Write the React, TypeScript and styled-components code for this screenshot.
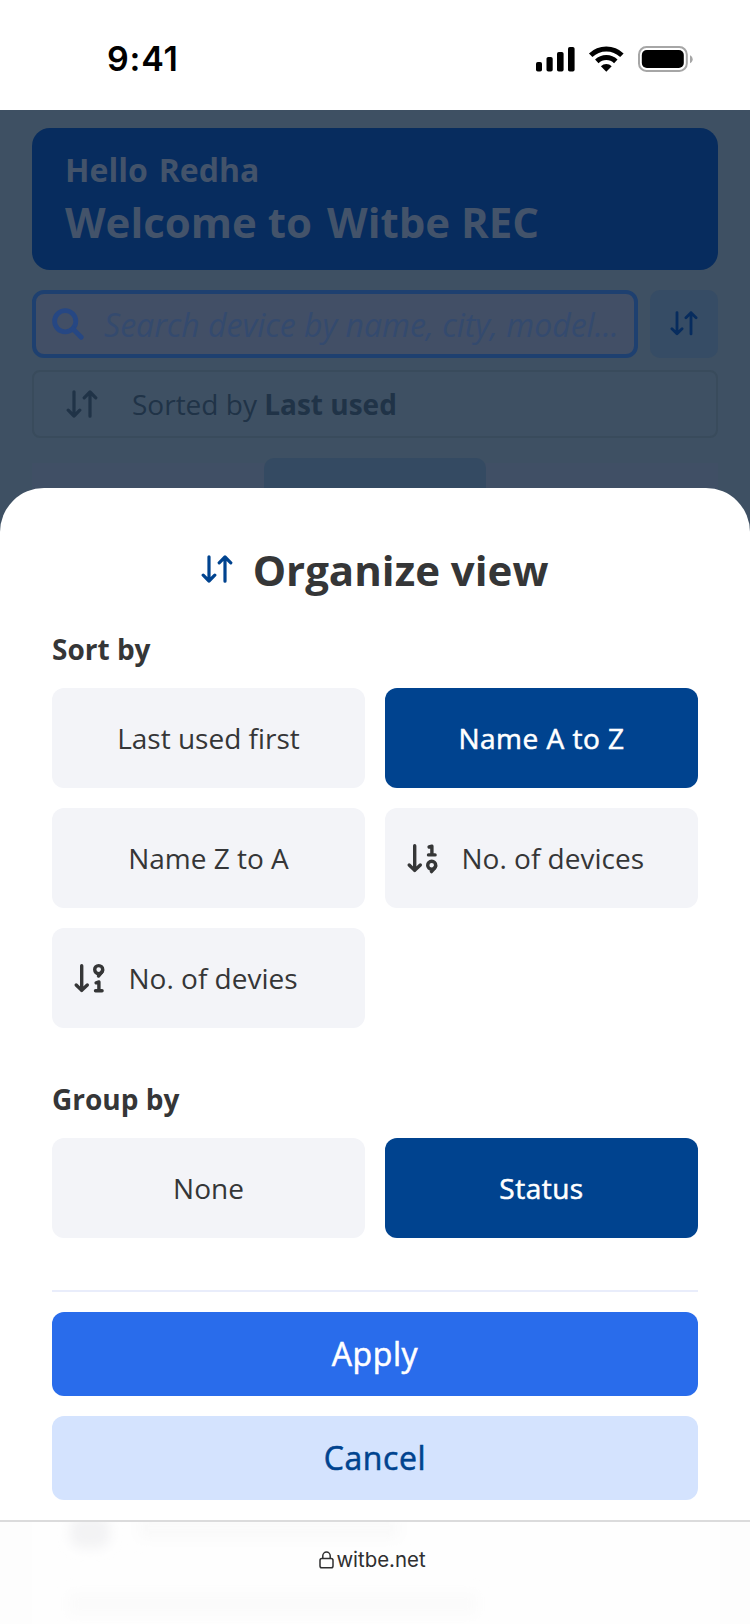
import React from "react";
import styled, { createGlobalStyle, css } from "styled-components";

const GlobalStyle = createGlobalStyle`
  *, *::before, *::after { box-sizing: border-box; }
  html, body { margin: 0; padding: 0; }
  body { background: #fff; font-family: "Open Sans", "Noto Sans", sans-serif; color: #353637; }
  button { font: inherit; border: 0; margin: 0; }
`;

const Screen = styled.div`
  width: 750px;
  height: 1624px;
  display: flex;
  flex-direction: column;
  background: #fff;
  overflow: hidden;
`;

const StatusBar = styled.header`
  height: 110px;
  flex: none;
  display: flex;
  align-items: center;
  justify-content: space-between;
  padding: 8px 57px 0 107px;
`;

const Clock = styled.span`
  font: 600 34px/40px Inter, sans-serif;
  letter-spacing: 0.8px;
  color: #000;
`;

const StatusIcons = styled.svg`
  display: block;
  width: 158px;
  height: 28px;
`;

const Dimmed = styled.div`
  flex: none;
  height: 424px;
  display: flex;
  flex-direction: column;
  padding: 18px 32px 0;
  background: #3e5063;
`;

const Welcome = styled.section`
  height: 142px;
  flex: none;
  border-radius: 18px;
  background: #072c5e;
  color: #43536a;
  padding: 20px 33px;
  font-weight: 700;
`;

const Greeting = styled.div`
  display: flex;
  gap: 11px;
  font-size: 32px;
  line-height: 44px;
`;

const WelcomeTitle = styled.div`
  display: flex;
  gap: 15px;
  margin-top: 1px;
  font-size: 42px;
  line-height: 58px;
`;

const SearchRow = styled.div`
  display: flex;
  gap: 12px;
  margin-top: 20px;
`;

const SearchField = styled.div`
  width: 606px;
  height: 68px;
  display: flex;
  align-items: center;
  gap: 20px;
  padding: 0 16px;
  border: 4px solid #1e4070;
  border-radius: 12px;
  background: #424f66;
  color: #344a6e;
  font-size: 32px;
  font-style: italic;
  white-space: nowrap;
`;

const SearchGlyph = styled.svg`
  display: block;
  flex: none;
  width: 32px;
  height: 32px;
`;

const SortButton = styled.button`
  width: 68px;
  height: 68px;
  display: flex;
  align-items: center;
  justify-content: center;
  padding: 0 0 1px;
  border-radius: 10px;
  background: #364c65;
  color: #072c5e;
`;

const SortedRow = styled.div`
  height: 68px;
  flex: none;
  display: flex;
  align-items: center;
  gap: 34px;
  margin-top: 12px;
  padding: 0 32px;
  border: 2px solid #394b5c;
  border-radius: 8px;
  color: #203347;
  font-size: 28px;
`;

const DevicesCard = styled.div`
  flex: 1;
  display: flex;
  justify-content: center;
  margin-top: 20px;
  background: linear-gradient(#3e5063 5px, #404f65 5px);
`;

const CardTab = styled.div`
  width: 222px;
  border-radius: 10px 10px 0 0;
  background: #344a62;
`;

const Sheet = styled.main`
  position: relative;
  flex: none;
  height: 1032px;
  margin-top: -46px;
  padding: 51px 52px 0;
  border-radius: 44px 44px 0 0;
  background: #fff;
`;

const SheetTitle = styled.h1`
  display: flex;
  align-items: center;
  justify-content: center;
  gap: 20px;
  height: 60px;
  margin: 0;
  padding-right: 1px;
  font-size: 42px;
  font-weight: 700;
`;

const TitleIcon = styled.span`
  display: flex;
  color: #00438f;
`;

const GroupLabel = styled.h2<{ $top: number }>`
  margin: ${(p) => p.$top}px 0 19px;
  font-size: 28px;
  line-height: 40px;
  font-weight: 700;
`;

const OptionGrid = styled.div`
  display: grid;
  grid-template-columns: 1fr 1fr;
  grid-auto-rows: 100px;
  gap: 20px;
`;

const mediumWeight = css`
  -webkit-text-stroke: 0.55px currentColor;
`;

const Option = styled.button<{ $active?: boolean; $withIcon?: boolean }>`
  display: flex;
  align-items: center;
  justify-content: ${(p) => (p.$withIcon ? "flex-start" : "center")};
  gap: 20.5px;
  padding: 0 20px;
  border-radius: 12px;
  background: #f3f4f8;
  color: #353637;
  font-size: 28px;
  ${(p) =>
    p.$active &&
    css`
      background: #00438f;
      color: #fff;
      letter-spacing: 0.5px;
      ${mediumWeight}
    `}
`;

const Divider = styled.hr`
  height: 2px;
  margin: 52px 0 20px;
  border: 0;
  background: #e9edfb;
`;

const Action = styled.button<{ $primary?: boolean }>`
  display: block;
  width: 100%;
  height: 84px;
  padding: 0 0 1px;
  border-radius: 12px;
  background: ${(p) => (p.$primary ? "#296ceb" : "#d4e3fe")};
  color: ${(p) => (p.$primary ? "#fff" : "#00438f")};
  font-size: 32px;
  letter-spacing: 0.6px;
  ${mediumWeight}

  & + & {
    margin-top: 20px;
  }
`;

const BrowserBar = styled.footer`
  position: relative;
  flex: 1;
  display: flex;
  justify-content: center;
  padding: 25px 5px 0 0;
  border-top: 2px solid #dbdbdc;
  background: #fdfdfd;
  overflow: hidden;
`;

const Address = styled.div`
  position: relative;
  display: flex;
  align-items: center;
  gap: 2px;
  height: 26px;
  font: 400 20.4px/26px Inter, sans-serif;
  color: #2f2f30;
`;

const Haze = styled.svg`
  position: absolute;
  inset: 0;
  width: 750px;
  height: 104px;
`;

function SortArrows({ size }: { size: number }) {
  return (
    <svg width={size} height={(size * 28) / 32} viewBox="0 0 32 28" fill="none" stroke="currentColor" strokeWidth="3.2" strokeLinecap="round" strokeLinejoin="round">
      <path d="M8 1.8V26M2.2 20.2L8 26L13.8 20.2M24 26.2V2M18.2 7.8L24 2L29.8 7.8" />
    </svg>
  );
}

function NumericSort({ descending }: { descending?: boolean }) {
  return (
    <svg width="36" height="32" viewBox="0 0 36 32" fill="none" stroke="currentColor" strokeWidth="3.4" strokeLinecap="round" strokeLinejoin="round">
      <path d="M9.7 3.7V28.4M4.2 23L9.7 28.4L15.3 23" />
      <path
        transform={descending ? "translate(19.5 18)" : "translate(19.5 2.2)"}
        d="M4.6 2.8L7.4 2V10.5M4 10.7H10.6"
      />
      <g transform={descending ? "translate(19.5 2.2)" : "translate(19.5 17.8)"}>
        <circle cx="7.2" cy="5.4" r="4" />
        <path d="M11.1 6.4C10.5 8.5 8.7 10 7 11.8" />
      </g>
    </svg>
  );
}

export default function App() {
  return (
    <>
      <GlobalStyle />
      <Screen>
        <StatusBar>
          <Clock>9:41</Clock>
          <StatusIcons viewBox="0 0 158 28">
            <rect x="1" y="17" width="6" height="9.5" rx="1.8" />
            <rect x="11.5" y="12" width="6.2" height="14.5" rx="1.8" />
            <rect x="22" y="7" width="6.6" height="19.5" rx="1.8" />
            <rect x="33" y="2" width="6.6" height="24.5" rx="1.8" />
            <g fill="none" stroke="#000" strokeWidth="5">
              <path d="M55.7 10.2A22.6 22.6 0 0 1 86.9 10.2" />
              <path d="M61.8 16.4A13.7 13.7 0 0 1 80.8 16.4" />
            </g>
            <path d="M71.3 26.8L65.9 21.2A7.8 7.8 0 0 1 76.7 21.2Z" />
            <rect x="104" y="2" width="47.8" height="24" rx="7.5" fill="none" stroke="#a6a6a6" strokeWidth="2" />
            <rect x="106.8" y="5" width="42" height="18" rx="5" />
            <path d="M155 10.2C158.6 12 158.6 16.6 155 18.2Z" fill="#a6a6a6" />
          </StatusIcons>
        </StatusBar>

        <Dimmed>
          <Welcome>
            <Greeting>
              <span>Hello</span>
              <span>Redha</span>
            </Greeting>
            <WelcomeTitle>
              <span>Welcome to</span>
              <span>Witbe REC</span>
            </WelcomeTitle>
          </Welcome>
          <SearchRow>
            <SearchField>
              <SearchGlyph viewBox="0 0 32 32" fill="none" stroke="#264783" strokeWidth="4.8" strokeLinecap="round">
                <circle cx="13.2" cy="13.2" r="10.6" />
                <path d="M21 21L29.2 29.2" />
              </SearchGlyph>
              <span>Search device by name, city, model...</span>
            </SearchField>
            <SortButton aria-label="Organize view">
              <SortArrows size={28} />
            </SortButton>
          </SearchRow>
          <SortedRow>
            <SortArrows size={32} />
            <span>
              Sorted by <b>Last used</b>
            </span>
          </SortedRow>
          <DevicesCard>
            <CardTab />
          </DevicesCard>
        </Dimmed>

        <Sheet>
          <SheetTitle>
            <TitleIcon>
              <SortArrows size={32} />
            </TitleIcon>
            Organize view
          </SheetTitle>
          <GroupLabel $top={30}>Sort by</GroupLabel>
          <OptionGrid>
            <Option>Last used first</Option>
            <Option $active>Name A to Z</Option>
            <Option>Name Z to A</Option>
            <Option $withIcon>
              <NumericSort />
              No. of devices
            </Option>
            <Option $withIcon>
              <NumericSort descending />
              No. of devies
            </Option>
          </OptionGrid>
          <GroupLabel $top={51}>Group by</GroupLabel>
          <OptionGrid>
            <Option>None</Option>
            <Option $active>Status</Option>
          </OptionGrid>
          <Divider />
          <Action $primary>Apply</Action>
          <Action>Cancel</Action>
        </Sheet>

        <BrowserBar>
          <Haze viewBox="0 0 750 104">
            <defs>
              <filter id="soft" x="-20%" y="-50%" width="140%" height="200%">
                <feGaussianBlur stdDeviation="6" />
              </filter>
            </defs>
            <rect x="32" width="688" height="104" fill="#fefefe" />
            <g filter="url(#soft)">
              <rect x="70" y="-6" width="40" height="32" rx="12" fill="#f3f3f4" />
              <rect x="138" y="-6" width="262" height="24" fill="#fafafa" />
              <rect x="68" y="70" width="410" height="24" fill="#fbfbfb" />
            </g>
          </Haze>
          <Address>
            <svg width="15" height="18" viewBox="0 0 15 18" fill="none" stroke="currentColor" strokeWidth="1.5">
              <rect x="1" y="7.6" width="13" height="9.2" rx="1.8" />
              <path d="M3.8 7.6V4.8A3.7 3.7 0 0 1 11.2 4.8V7.6" />
            </svg>
            witbe.net
          </Address>
        </BrowserBar>
      </Screen>
    </>
  );
}
